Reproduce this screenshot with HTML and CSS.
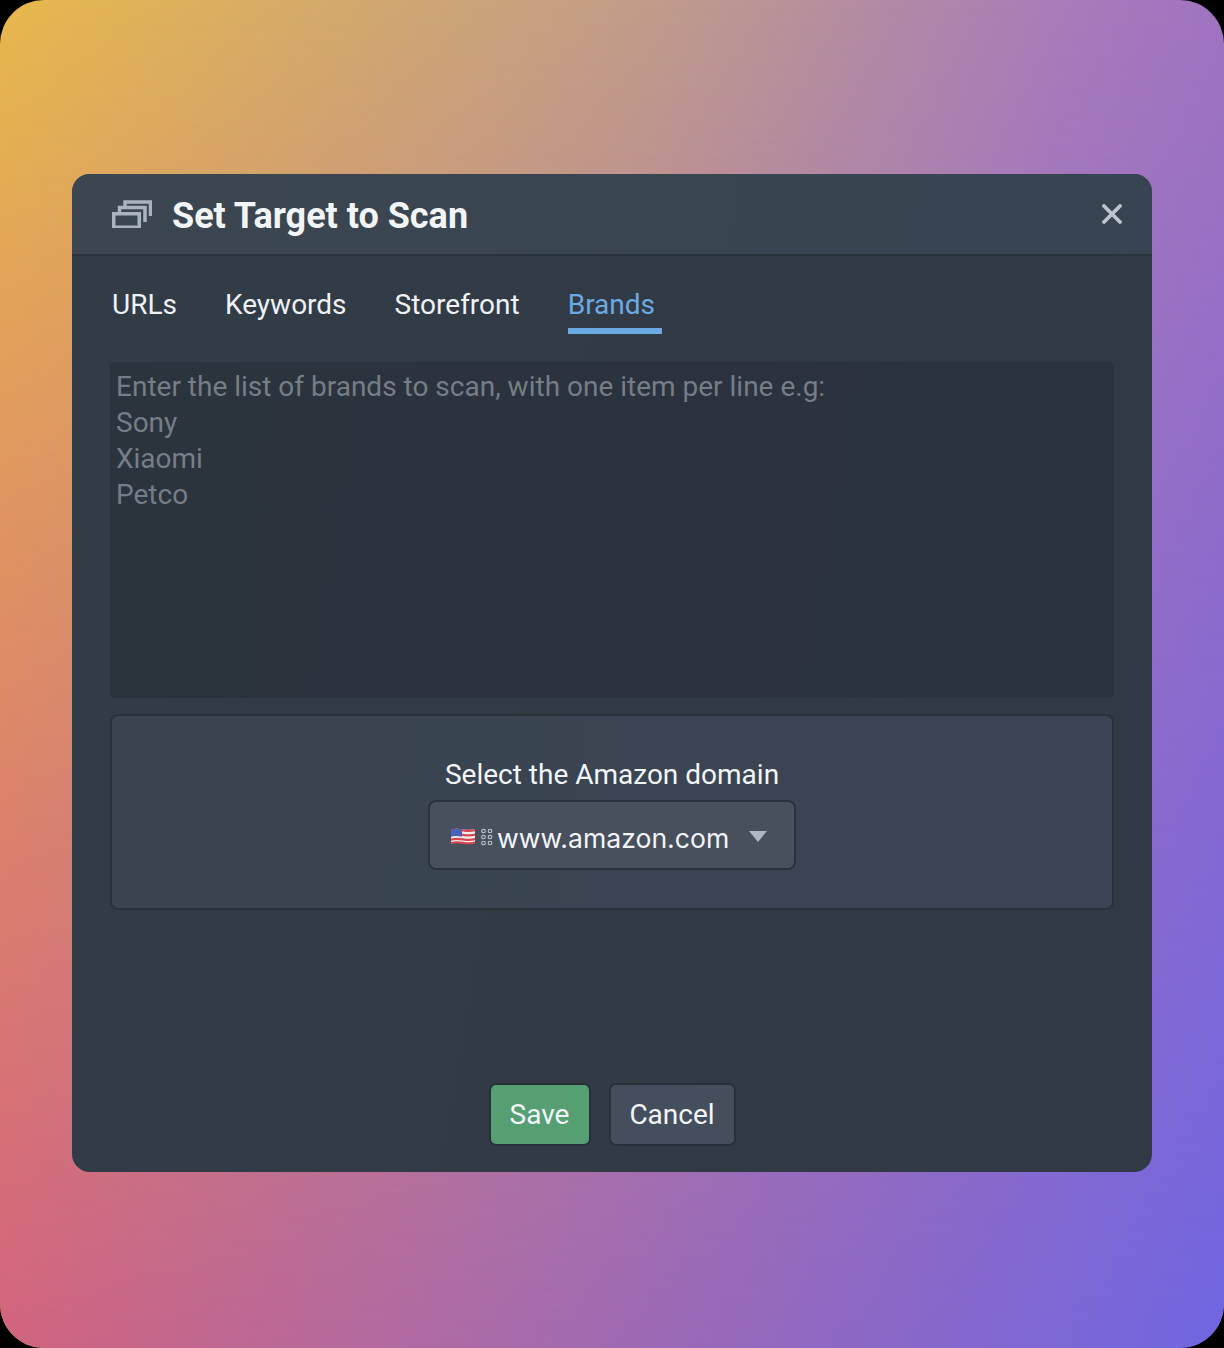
FILE: index.html
```html
<!DOCTYPE html>
<html lang="en">
<head>
<meta charset="utf-8">
<title>Set Target to Scan</title>
<link rel="stylesheet" href="styles.css">
</head>
<body>
<main class="stage">
  <section class="modal">
    <header class="modal-head">
      <svg class="head-icon" viewBox="0 0 40 28" width="40" height="28" aria-hidden="true">
        <path d="M1.750 13.750h25.500v13.500h-25.500z" fill="none" stroke="#a9b4bc" stroke-width="3.500"/>
        <path d="M7.500 12V7.500H33V22" fill="none" stroke="#a9b4bc" stroke-width="3.500"/>
        <path d="M13 6V2h25.500v14" fill="none" stroke="#a9b4bc" stroke-width="3.500"/>
      </svg>
      <h1 class="modal-title">Set Target to Scan</h1>
      <svg class="close" viewBox="0 0 20 20" width="20" height="20" aria-hidden="true">
        <path d="M2 2l16 16M18 2L2 18" stroke="#bcc5ce" stroke-width="3.800" stroke-linecap="round"/>
      </svg>
    </header>
    <div class="modal-body">
      <nav class="tabs">
        <span class="tab">URLs</span>
        <span class="tab">Keywords</span>
        <span class="tab">Storefront</span>
        <span class="tab active">Brands</span>
      </nav>
      <div class="textarea">Enter the list of brands to scan, with one item per line e.g:
Sony
Xiaomi
Petco</div>
      <div class="domain-panel">
        <div class="domain-label">Select the Amazon domain</div>
        <div class="select">
          <svg class="flag" viewBox="0 0 26 20" width="26" height="20" aria-hidden="true">
            <path d="M1 3.500c8-2.500 16 2 24-.500v14c-8 2.500-16-2-24 .500z" fill="#f3eef0"/>
            <path d="M1 3.500c8-2.500 16 2 24-.500v2.200c-8 2.500-16-2-24 .500zM1 8c8-2.500 16 2 24-.500v2.200c-8 2.500-16-2-24 .500zM1 12.500c8-2.500 16 2 24-.500v2.200c-8 2.500-16-2-24 .500zM1 16c8-2.500 16 2 24-.500v2c-8 2.500-16-2-24 .500z" fill="#d8454f"/>
            <path d="M1 3.500c4-1.200 7.500-.6 11 .1v7.200c-3.500-.7-7-1.300-11-.1z" fill="#4a63b8"/>
          </svg>
          <svg class="dots" viewBox="0 0 14 18" width="14" height="18" aria-hidden="true">
            <g fill="none" stroke="#c3cad2" stroke-width="1.100">
              <circle cx="3.500" cy="3" r="1.800"/><circle cx="10" cy="3" r="1.800"/>
              <circle cx="3.500" cy="9" r="1.800"/><circle cx="10" cy="9" r="1.800"/>
              <circle cx="3.500" cy="15" r="1.800"/><circle cx="10" cy="15" r="1.800"/>
            </g>
          </svg>
          <span class="select-value">www.amazon.com</span>
          <span class="caret"></span>
        </div>
      </div>
      <div class="actions">
        <button class="btn btn-save" type="button">Save</button>
        <button class="btn btn-cancel" type="button">Cancel</button>
      </div>
    </div>
  </section>
</main>
</body>
</html>
```
FILE: styles.css
```css
* { box-sizing: border-box; }
html, body { margin: 0; height: 100%; background: #000; }
body { font-family: Roboto, "Liberation Sans", sans-serif; overflow: hidden; }
.stage {
  position: relative;
  width: 1224px;
  height: 1348px;
  border-radius: 44px;
  overflow: hidden;
  padding: 174px 72px 176px;
  background: linear-gradient(100deg, #e8b94c 0%, #c09b8c 46%, #a77bbb 74%, #9468ca 100%);
}
.stage::before {
  content: "";
  position: absolute;
  inset: 0;
  background: linear-gradient(100deg, #dc6274 8%, #ab6aa6 48%, #6f66e2 100%);
  -webkit-mask-image: linear-gradient(to bottom, transparent 0%, #000 100%);
  mask-image: linear-gradient(to bottom, transparent 0%, #000 100%);
}
.modal {
  position: relative;
  width: 1080px;
  height: 998px;
  border-radius: 18px;
  background: linear-gradient(100deg, #323c46 0%, #303945 100%);
  color: #f2f5f8;
  display: flex;
  flex-direction: column;
  overflow: hidden;
}
.modal-head {
  height: 82px;
  flex: none;
  display: flex;
  align-items: center;
  padding: 0 30px 0 40px;
  background: linear-gradient(100deg, #3b4650 0%, #384452 100%);
  border-bottom: 2px solid #2a333c;
}
.head-icon { flex: none; margin-right: 20px; }
.modal-title {
  margin: 4px 0 0;
  flex: 1;
  font-size: 36px;
  font-weight: 700;
  color: #f2f5f8;
  line-height: 40px;
}
.close { flex: none; }
.modal-body {
  flex: 1;
  display: flex;
  flex-direction: column;
  padding: 0 38px 26px;
}
.tabs {
  display: flex;
  gap: 48px;
  padding: 28px 0 0 2px;
  height: 78px;
  flex: none;
}
.tab {
  font-size: 28px;
  line-height: 42px;
  height: 50px;
  color: #eef1f5;
}
.tab.active {
  color: #6caae4;
  border-bottom: 6px solid #6caae4;
  padding-right: 7px;
}
.textarea {
  margin-top: 28px;
  height: 336px;
  flex: none;
  background: linear-gradient(100deg, #2b333c 0%, #2b3240 100%);
  border-radius: 4px;
  padding: 7px 6px 5px;
  font-size: 28px;
  line-height: 36px;
  color: #757d87;
  white-space: pre-line;
}
.domain-panel {
  margin-top: 16px;
  height: 196px;
  flex: none;
  background: linear-gradient(100deg, #39444f 0%, #3b4455 100%);
  border: 2px solid #28313a;
  border-radius: 8px;
  display: flex;
  flex-direction: column;
  align-items: center;
  padding-top: 41px;
}
.domain-label {
  font-size: 28px;
  line-height: 36px;
  color: #f2f5f8;
}
.select {
  margin-top: 7px;
  width: 368px;
  height: 70px;
  background: #484f5d;
  border: 2px solid #2a333d;
  border-radius: 8px;
  display: flex;
  align-items: center;
  padding: 0 27px 0 20px;
}
.flag { flex: none; margin-right: 4px; margin-top: 2px; }
.dots { flex: none; margin-right: 3px; margin-top: 4px; }
.select-value {
  font-family: Inter, "Liberation Sans", sans-serif;
  font-size: 26.600px;
  margin-top: 6px;
  color: #f2f5f8;
  flex: 1;
  white-space: nowrap;
}
.caret {
  flex: none;
  width: 0;
  height: 0;
  border-left: 9px solid transparent;
  border-right: 9px solid transparent;
  border-top: 11px solid #aeb6bf;
  margin-top: 2px;
}
.actions {
  margin-top: auto;
  display: flex;
  justify-content: center;
  gap: 18px;
}
.btn {
  height: 63px;
  font-family: Roboto, "Liberation Sans", sans-serif;
  font-size: 28px;
  line-height: 1;
  color: #f2f5f8;
  border-radius: 7px;
  border: 2px solid #28313a;
  padding: 0;
}
.btn-save { width: 102px; background: #559f73; }
.btn-cancel { width: 127px; background: #454e5d; }
```
